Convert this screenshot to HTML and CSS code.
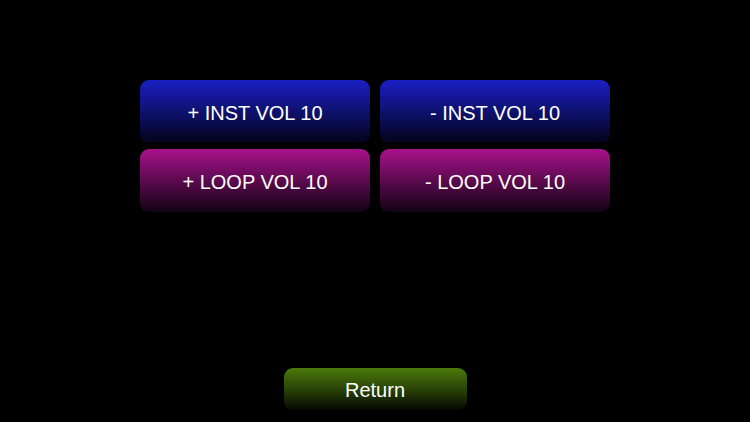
FILE: index.html
```html
<!DOCTYPE html>
<html lang="en">
<head>
    <meta charset="UTF-8">
    <meta name="viewport" content="width=device-width, initial-scale=1.0">
    <title>Volume</title>
    <link rel="stylesheet" href="styles.css">
</head>
<body>
    <div class="volumes">
        <button class="btn inst">+ INST VOL 10</button>
        <button class="btn inst">- INST VOL 10</button>
        <button class="btn loop">+ LOOP VOL 10</button>
        <button class="btn loop">- LOOP VOL 10</button>
    </div><!-- volumes -->
    <button class="btn return">Return</button>
</body>
</html>
```

FILE: styles.css
```css
html {
    background: #000;
}
body {
    margin: 0;
    height: 422px;
    display: flex;
    flex-direction: column;
    align-items: center;
    padding: 80px 0 12px;
    box-sizing: border-box;
    background: #000;
    font-family: "Liberation Sans", Arial, sans-serif;
}
.volumes {
    display: grid;
    grid-template-columns: 230px 230px;
    grid-auto-rows: 63px;
    gap: 6px 10px;
}
.btn {
    border: none;
    outline: none;
    border-radius: 9px;
    color: #fff;
    font-family: inherit;
    font-size: 20px;
    padding: 4px 0 0;
    cursor: pointer;
}
.inst {
    background: linear-gradient(to bottom, #1a1fc4 0%, #0e116e 50%, #030318 100%);
}
.loop {
    background: linear-gradient(to bottom, #a8128c 0%, #5c0a4e 50%, #120212 100%);
}
.return {
    margin-top: auto;
    width: 183px;
    height: 42px;
    background: linear-gradient(to bottom, #4c7a0c 0%, #263e06 55%, #050802 100%);
    padding: 2px 0 0;
}
```
